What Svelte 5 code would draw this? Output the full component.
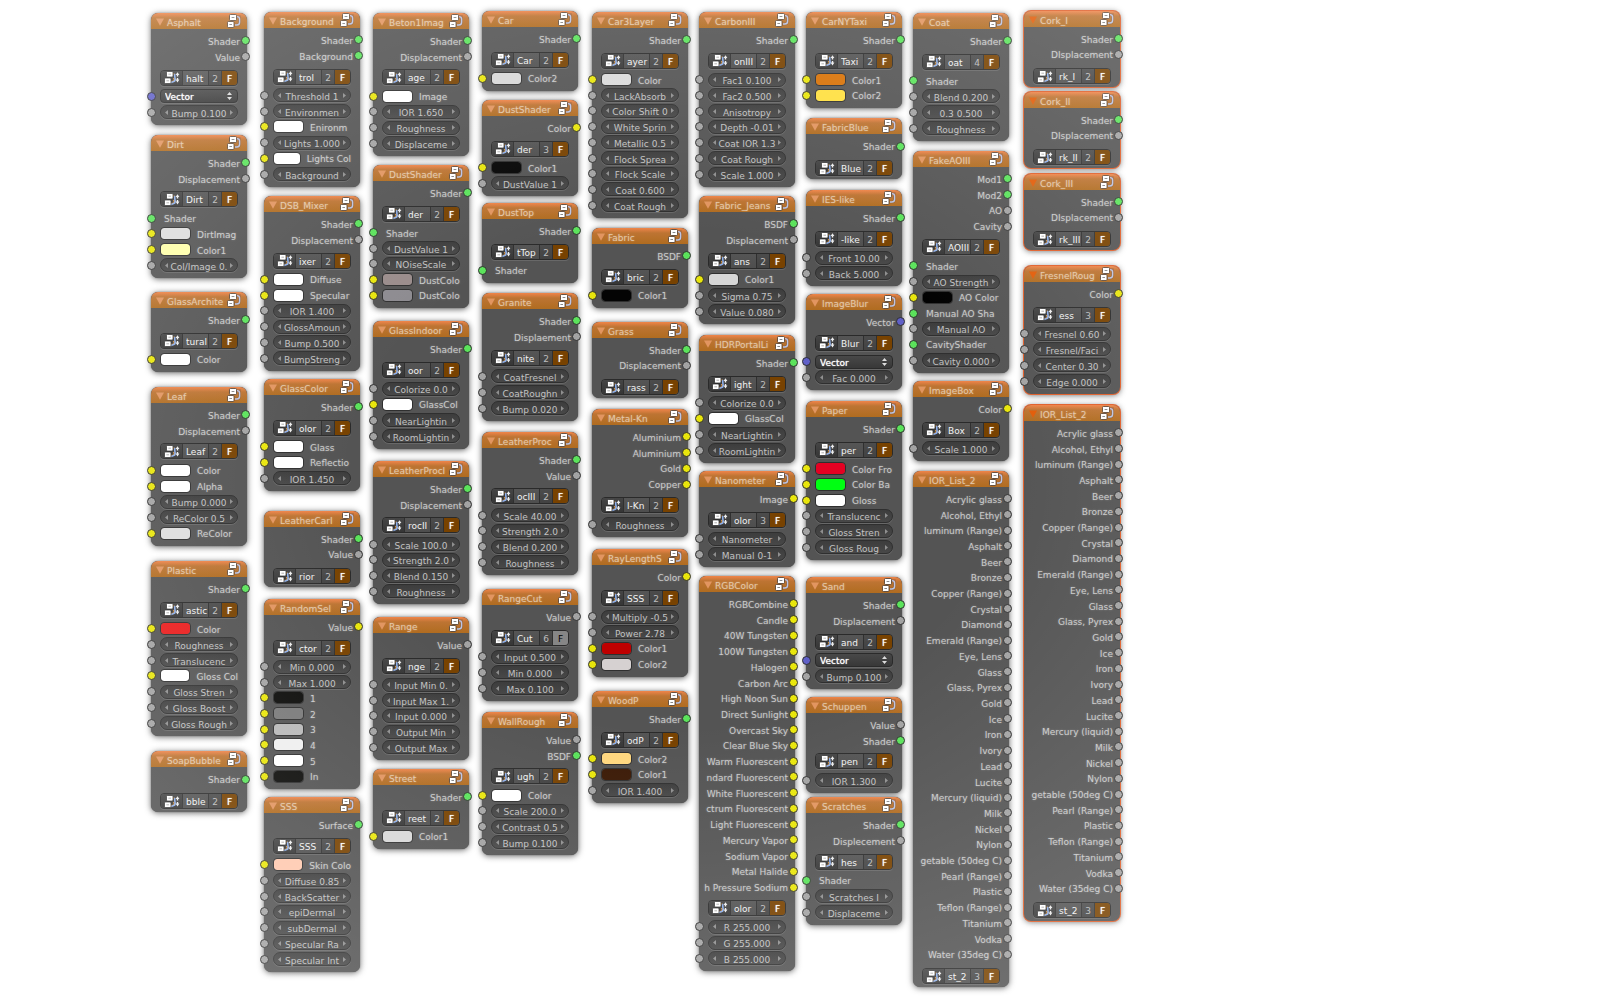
<script>
  const n = (text) => ({ kind: 'number', text, socket: 'grey' });
  const c = (color, text) => ({ kind: 'color', color, text, socket: 'yellow' });
  const s = (text) => ({ kind: 'plain', text, socket: 'green' });
  const vec = { kind: 'vector', text: 'Vector', socket: 'blue' };

  const g = (text) => ({ text, socket: 'green' });
  const v = (text) => ({ text, socket: 'grey' });
  const y = (text) => ({ text, socket: 'yellow' });
  const b = (text) => ({ text, socket: 'blue' });

  const W = '#ffffff';
  const materials = [
    'Acrylic glass', 'Alcohol, Ethyl', 'luminum (Range)', 'Asphalt', 'Beer', 'Bronze',
    'Copper (Range)', 'Crystal', 'Diamond', 'Emerald (Range)', 'Eye, Lens', 'Glass',
    'Glass, Pyrex', 'Gold', 'Ice', 'Iron', 'Ivory', 'Lead', 'Lucite', 'Mercury (liquid)',
    'Milk', 'Nickel', 'Nylon', 'getable (50deg C)', 'Pearl (Range)', 'Plastic',
    'Teflon (Range)', 'Titanium', 'Vodka', 'Water (35deg C)'
  ].map(v);
  const lights = [
    'RGBCombine', 'Candle', '40W Tungsten', '100W Tungsten', 'Halogen', 'Carbon Arc',
    'High Noon Sun', 'Direct Sunlight', 'Overcast Sky', 'Clear Blue Sky', 'Warm Fluorescent',
    'ndard Fluorescent', 'White Fluorescent', 'ctrum Fluorescent', 'Light Fluorescent',
    'Mercury Vapor', 'Sodium Vapor', 'Metal Halide', 'h Pressure Sodium'
  ].map(y);

  // Each column: left edge, then [top, title, group name, outputs, inputs, options]
  const columns = [
    [151, [
      [13, 'Asphalt', 'halt', [g('Shader'), v('Value')], [vec, n('Bump 0.100')]],
      [135, 'Dirt', 'Dirt', [g('Shader'), v('Displacement')], [s('Shader'), c('#dedede', 'DirtImag'), c('#ffffaa', 'Color1'), n('Col/Image 0.')]],
      [292, 'GlassArchite', 'tural', [g('Shader')], [c(W, 'Color')]],
      [387, 'Leaf', 'Leaf', [g('Shader'), v('Displacement')], [c(W, 'Color'), c(W, 'Alpha'), n('Bump 0.000'), n('ReColor 0.5'), c('#dedede', 'ReColor')]],
      [561, 'Plastic', 'astic', [g('Shader')], [c('#ea1c1c', 'Color'), n('Roughness'), n('Translucenc'), c(W, 'Gloss Col'), n('Gloss Stren'), n('Gloss Boost'), n('Gloss Rough')]],
      [751, 'SoapBubble', 'bble', [g('Shader')], []]
    ]],
    [264, [
      [12, 'Background', 'trol', [g('Shader'), g('Background')], [n('Threshold 1'), n('Environmen'), c(W, 'Enironm'), n('Lights 1.000'), c(W, 'Lights Col'), n('Background')]],
      [196, 'DSB_Mixer', 'ixer', [g('Shader'), v('Displacement')], [c(W, 'Diffuse'), c(W, 'Specular'), n('IOR 1.400'), n('GlossAmoun'), n('Bump 0.500'), n('BumpStreng')]],
      [379, 'GlassColor', 'olor', [g('Shader')], [c(W, 'Glass'), c(W, 'Reflectio'), n('IOR 1.450')]],
      [511, 'LeatherCarI', 'rior', [g('Shader'), v('Value')], []],
      [599, 'RandomSel', 'ctor', [y('Value')], [n('Min 0.000'), n('Max 1.000'), c('#0c0c0a', '1'), c('#7a7a7a', '2'), c('#b9b9b9', '3'), c('#efefef', '4'), c(W, '5'), c('#0c0c0a', 'In')]],
      [797, 'SSS', 'SSS', [g('Surface')], [c('#ffc9af', 'Skin Colo'), n('Diffuse 0.85'), n('BackScatter'), n('epiDermal'), n('subDermal'), n('Specular Ra'), n('Specular Int')]]
    ]],
    [373, [
      [13, 'Beton1Imag', 'age', [g('Shader'), v('Displacement')], [c(W, 'Image'), n('IOR 1.650'), n('Roughness'), n('Displaceme')]],
      [165, 'DustShader', 'der', [g('Shader')], [s('Shader'), n('DustValue 1'), n('NOiseScale'), c('#9a8c8b', 'DustColo'), c('#8d8b90', 'DustColo')]],
      [321, 'GlassIndoor', 'oor', [g('Shader')], [n('Colorize 0.0'), c(W, 'GlassCol'), n('NearLightin'), n('RoomLightin')]],
      [461, 'LeatherProcI', 'rocII', [g('Shader'), v('Displacement')], [n('Scale 100.0'), n('Strength 2.0'), n('Blend 0.150'), n('Roughness')]],
      [617, 'Range', 'nge', [v('Value')], [n('Input Min 0.'), n('Input Max 1.'), n('Input 0.000'), n('Output Min'), n('Output Max')]],
      [769, 'Street', 'reet', [g('Shader')], [c('#d8d8d8', 'Color1')]]
    ]],
    [482, [
      [11, 'Car', 'Car', [g('Shader')], [c('#d8d8d8', 'Color2')]],
      [100, 'DustShader', 'der', [y('Color')], [c('#040404', 'Color1'), n('DustValue 1')], { users: 3 }],
      [203, 'DustTop', 'tTop', [g('Shader')], [s('Shader')]],
      [293, 'Granite', 'nite', [g('Shader'), v('Displaement')], [n('CoatFresnel'), n('CoatRoughn'), n('Bump 0.020')]],
      [432, 'LeatherProc', 'ocIII', [g('Shader'), v('Value')], [n('Scale 40.00'), n('Strength 2.0'), n('Blend 0.200'), n('Roughness')]],
      [589, 'RangeCut', 'Cut', [v('Value')], [n('Input 0.500'), n('Min 0.000'), n('Max 0.100')], { users: 6, off: true }],
      [712, 'WallRough', 'ugh', [v('Value'), g('BSDF')], [c(W, 'Color'), n('Scale 200.0'), n('Contrast 0.5'), n('Bump 0.100')]]
    ]],
    [592, [
      [12, 'Car3Layer', 'ayer', [g('Shader')], [c('#dadada', 'Color'), n('LackAbsorb'), n('Color Shift 0'), n('White Sprin'), n('Metallic 0.5'), n('Flock Sprea'), n('Flock Scale'), n('Coat 0.600'), n('Coat Rough')]],
      [228, 'Fabric', 'bric', [g('BSDF')], [c('#040404', 'Color1')]],
      [322, 'Grass', 'rass', [g('Shader'), v('Displacement')], []],
      [409, 'Metal-Kn', 'l-Kn', [y('Aluminium'), y('Aluminium'), y('Gold'), y('Copper')], [n('Roughness')]],
      [549, 'RayLengthS', 'SSS', [y('Color')], [n('Multiply -0.5'), n('Power 2.78'), c('#bf0000', 'Color1'), c('#d6d1d1', 'Color2')]],
      [691, 'WoodP', 'odP', [g('Shader')], [c('#ffd77e', 'Color2'), c('#3b1a06', 'Color1'), n('IOR 1.400')]]
    ]],
    [699, [
      [12, 'CarbonIII', 'onIII', [g('Shader')], [n('Fac1 0.100'), n('Fac2 0.500'), n('Anisotropy'), n('Depth -0.01'), n('Coat IOR 1.3'), n('Coat Rough'), n('Scale 1.000')]],
      [196, 'Fabric_Jeans', 'ans', [g('BSDF'), v('Displacement')], [c('#d6d6d6', 'Color1'), n('Sigma 0.75'), n('Value 0.080')]],
      [335, 'HDRPortalLi', 'ight', [g('Shader')], [n('Colorize 0.0'), c(W, 'GlassCol'), n('NearLightin'), n('RoomLightin')]],
      [471, 'Nanometer', 'olor', [y('Image')], [n('Nanometer'), n('Manual 0-1')], { users: 3 }],
      [576, 'RGBColor', 'olor', lights, [n('R 255.000'), n('G 255.000'), n('B 255.000')]]
    ]],
    [806, [
      [12, 'CarNYTaxi', 'Taxi', [g('Shader')], [c('#d97206', 'Color1'), c('#ffe040', 'Color2')]],
      [118, 'FabricBlue', 'Blue', [g('Shader')], []],
      [190, 'IES-like', '-like', [g('Shader')], [n('Front 10.00'), n('Back 5.000')]],
      [294, 'ImageBlur', 'Blur', [b('Vector')], [vec, n('Fac 0.000')]],
      [401, 'Paper', 'per', [g('Shader')], [c('#e50022', 'Color Fro'), c('#00ff12', 'Color Ba'), c(W, 'Gloss'), n('Translucenc'), n('Gloss Stren'), n('Gloss Roug')]],
      [577, 'Sand', 'and', [g('Shader'), v('Displacement')], [vec, n('Bump 0.100')]],
      [697, 'Schuppen', 'pen', [v('Value'), g('Shader')], [n('IOR 1.300')]],
      [797, 'Scratches', 'hes', [g('Shader'), v('Displecement')], [s('Shader'), n('Scratches I'), n('Displaceme')]]
    ]],
    [913, [
      [13, 'Coat', 'oat', [g('Shader')], [s('Shader'), n('Blend 0.200'), n('0.3 0.500'), n('Roughness')], { users: 4 }],
      [151, 'FakeAOIII', 'AOIII', [g('Mod1'), g('Mod2'), v('AO'), v('Cavity')], [s('Shader'), n('AO Strength'), c('#000000', 'AO Color'), s('Manual AO Sha'), n('Manual AO'), s('CavityShader'), n('Cavity 0.000')]],
      [381, 'ImageBox', 'Box', [y('Color')], [n('Scale 1.000')]],
      [471, 'IOR_List_2', 'st_2', materials, [], { users: 3 }]
    ]],
    [1024, [
      [11, 'Cork_I', 'rk_I', [g('Shader'), v('DIsplacement')], [], { selected: true }],
      [92, 'Cork_II', 'rk_II', [g('Shader'), v('DIsplacement')], [], { selected: true }],
      [174, 'Cork_III', 'rk_III', [g('Shader'), v('DIsplacement')], [], { selected: true }],
      [266, 'FresnelRoug', 'ess', [y('Color')], [n('Fresnel 0.60'), n('Fresnel/Faci'), n('Center 0.30'), n('Edge 0.000')], { users: 3, selected: true }],
      [405, 'IOR_List_2', 'st_2', materials, [], { users: 3, selected: true }]
    ]]
  ];

  // Header, group selector and padding are fixed; seven socket rows span 110 pixels.
  const nodeHeight = (outs, ins) =>
    (ins.length ? 49 : 45) + Math.round(((outs.length + ins.length) * 110) / 7);

  const nodes = columns.flatMap(([x, list]) =>
    list.map(([top, title, name, outputs, inputs, opts = {}]) => ({
      x, top, title, name, outputs, inputs,
      height: nodeHeight(outputs, inputs),
      users: opts.users ?? 2,
      off: opts.off ?? false,
      selected: opts.selected ?? false
    }))
  );
</script>

<main class="canvas">
  {#each nodes as node, i}
    <section
      class="node"
      class:selected={node.selected}
      style="left:{node.x}px;top:{node.top}px;height:{node.height}px"
    >
      <header>
        <svg class="fold" viewBox="0 0 8 8" aria-hidden="true"><path d="M0 0.5H8L4 7.8Z" /></svg>
        <h2>{node.title}</h2>
        <svg class="group" viewBox="0 0 14 14" aria-hidden="true">
          <path d="M10 2.6H12.4V8.4Q12.4 11 9.6 11H8" fill="none" stroke="#3a3a48" stroke-width="2.6" opacity=".3" />
          <path d="M10 2.6Q12.6 2.6 12.6 5V8.2Q12.6 11 9.8 11H8" fill="none" stroke="#bcc4e4" stroke-width="1.4" />
          <rect x="2.5" y="0.5" width="7" height="6" rx="1" fill="#fff" stroke="#4a3626" stroke-width="0.8" />
          <path d="M4.6 3.5H7.4" stroke="#888" />
          <rect x="0.5" y="7.5" width="6.5" height="6" rx="1" fill="#fff" stroke="#4a3626" stroke-width="0.8" />
          <path d="M2.4 10.5H5" stroke="#888" />
        </svg>
      </header>
      <div class="body" class:bare={node.inputs.length === 0}>
        {#each node.outputs as out}
          <div class="row out">
            <span>{out.text}</span>
            <i class="socket {out.socket}"></i>
          </div>
        {/each}
        <div class="selector">
          <button class="browse" aria-label="Browse groups">
            <svg viewBox="0 0 16 13" aria-hidden="true">
              <path d="M8.4 3H10.6M9 7.5C11.2 8 11 10.4 7 10.4" fill="none" stroke="#e0953a" stroke-width="1.2" />
              <path d="M11 3C9.6 5.4 12.4 7.2 10.6 10.2L7 11.4" fill="none" stroke="#8fb0ea" stroke-width="1.6" />
              <rect x="2.5" y="0.5" width="6.5" height="5.5" rx="1" fill="#fff" stroke="#222" stroke-width="0.7" />
              <path d="M4.4 3.2H7" stroke="#999" stroke-width="0.8" />
              <rect x="0.5" y="7" width="6.5" height="5.5" rx="1" fill="#fff" stroke="#222" stroke-width="0.7" />
              <path d="M2.4 9.8H5" stroke="#999" stroke-width="0.8" />
              <path d="M13.5 1.2L15.4 4H14.2V5.6H12.8V4H11.6ZM13.5 11.4L11.6 8.6H12.8V7H14.2V8.6H15.4Z" fill="#eee" />
            </svg>
          </button>
          <input class="name" value={node.name} aria-label="Group name" />
          <button class="users" aria-label="Users">{node.users}</button>
          <button class="fake" class:off={node.off}>F</button>
        </div>
        {#each node.inputs as input, j}
          <div class="row in">
            <i class="socket {input.socket}"></i>
            {#if input.kind === 'number'}
              <div class="number">
                <button aria-label="Decrease"><svg viewBox="0 0 3 5" aria-hidden="true"><path d="M3 0V5L0 2.5Z" /></svg></button>
                <input value={input.text} aria-label={input.text} />
                <button aria-label="Increase"><svg viewBox="0 0 3 5" aria-hidden="true"><path d="M0 0V5L3 2.5Z" /></svg></button>
              </div>
            {:else if input.kind === 'color'}
              <input class="swatch" type="color" id="color-{i}-{j}" value={input.color} />
              <label for="color-{i}-{j}">{input.text}</label>
            {:else if input.kind === 'vector'}
              <div class="vector">
                <select aria-label="Vector"><option>Vector</option></select>
                <svg viewBox="0 0 5 8" aria-hidden="true"><path d="M2.5 0L5 3H0ZM2.5 8L0 5H5Z" /></svg>
              </div>
            {:else}
              <span class="plain">{input.text}</span>
            {/if}
          </div>
        {/each}
      </div>
    </section>
  {/each}
  <div class="haze"></div>
</main>

<style>
  :global(body) {
    margin: 0;
    background: #fff;
  }
  .canvas {
    position: relative;
    min-height: 100vh;
    overflow: hidden;
    font: 9px/12px 'DejaVu Sans', sans-serif;
    color: #cacaca;
  }
  .canvas * {
    box-sizing: border-box;
  }
  .haze {
    position: absolute;
    inset: 0;
    pointer-events: none;
    background: radial-gradient(ellipse 50% 62% at 42% 48%, rgba(255, 255, 255, 0) 40%, rgba(255, 255, 255, 0.18) 100%);
  }
  button,
  input,
  select {
    font: inherit;
    color: inherit;
    margin: 0;
    padding: 0;
    border: 0;
    background: none;
    min-width: 0;
    outline: 0;
  }
  .node {
    position: absolute;
    width: 96px;
    display: flex;
    flex-direction: column;
    border-radius: 7px;
    background: #545454;
    box-shadow: 0 1px 6px rgba(0, 0, 0, 0.65), 0 0 1px rgba(0, 0, 0, 0.7);
  }
  .node.selected {
    box-shadow: 0 0 0 1px #e0602c, 0 1px 6px rgba(0, 0, 0, 0.65);
  }
  header {
    flex: none;
    height: 16px;
    display: flex;
    align-items: center;
    padding: 0 6px 0 5px;
    border-radius: 7px 7px 0 0;
    background: linear-gradient(#f0854a, #bd7433 5px, #b06c20);
  }
  h2 {
    flex: 1;
    min-width: 0;
    margin: 4px 0 0 3px;
    font: inherit;
    color: #e3c8ab;
    white-space: nowrap;
    text-shadow: 0 0 2px rgba(255, 235, 215, 0.4);
  }
  .fold {
    width: 8px;
    height: 8px;
    margin-top: 2px;
    fill: #e29560;
  }
  .selected .fold {
    fill: #e25c08;
  }
  .group {
    width: 14px;
    height: 14px;
    flex: none;
  }
  .body {
    flex: 1;
    display: flex;
    flex-direction: column;
    padding: 4px 0 5px;
  }
  .body.bare {
    padding-bottom: 0;
  }
  .row {
    flex: 1 1 0;
    min-height: 0;
    display: flex;
    align-items: center;
    white-space: nowrap;
    text-shadow: 0 0 2px rgba(230, 230, 230, 0.4);
  }
  .out {
    justify-content: flex-end;
    gap: 1px;
    margin-right: -3px;
  }
  .out span,
  .plain,
  label {
    padding-top: 2px;
  }
  .in {
    gap: 4px;
    margin-left: -4px;
    padding-right: 9px;
  }
  .plain {
    padding-left: 4px;
  }
  .socket {
    position: relative;
    flex: none;
    width: 9px;
    height: 9px;
    border: 1px solid #303030;
    border-radius: 50%;
  }
  .green {
    background: #5be35b;
  }
  .yellow {
    background: #e9e60c;
  }
  .grey {
    background: #a3a3a3;
  }
  .blue {
    background: #6060c8;
  }
  .selector {
    flex: none;
    height: 16px;
    margin: 5px 9px 3px;
    display: grid;
    grid-template-columns: 21px 1fr 13px 16px;
    border: 1px solid #2a2a2a;
    border-radius: 4px;
    overflow: hidden;
    box-shadow: 0 1px 0 rgba(255, 255, 255, 0.12);
  }
  .bare .selector {
    margin-top: 6px;
  }
  .selector > * {
    background: linear-gradient(#4c4c4c, #424242);
    border-left: 1px solid #303030;
  }
  .selector > .browse {
    display: flex;
    align-items: center;
    justify-content: center;
    border-left: 0;
    background: linear-gradient(#454545, #363636);
  }
  .browse svg {
    width: 16px;
    height: 13px;
  }
  .selector > .name {
    width: 100%;
    padding: 2px 0 0 3px;
    color: #f2f2f2;
    background: linear-gradient(#555, #4e4e4e);
  }
  .users {
    color: #bdbdbd;
    padding-top: 2px;
  }
  .selector > .fake {
    color: #fff;
    padding-top: 2px;
    background: #784200;
    text-shadow: 0 0 1px #fff;
  }
  .selector > .fake.off {
    color: #000;
    background: #868686;
    text-shadow: none;
  }
  .number {
    flex: 1;
    min-width: 0;
    height: 14px;
    display: flex;
    align-items: center;
    border: 1px solid #2f2f2f;
    border-radius: 7px;
    background: linear-gradient(#3d3d3d, #484848);
    box-shadow: 0 1px 0 rgba(255, 255, 255, 0.12);
  }
  .number input {
    flex: 1;
    width: 0;
    height: 14px;
    padding-top: 3px;
    text-align: center;
    color: #c2c2c2;
  }
  .number button {
    flex: none;
    width: 7px;
    display: flex;
    justify-content: flex-end;
  }
  .number button:last-child {
    justify-content: flex-start;
  }
  .number svg {
    width: 3px;
    height: 5px;
    fill: #909090;
  }
  .swatch {
    appearance: none;
    width: 31px;
    height: 13px;
    border: 1px solid #2f2f2f;
    border-radius: 4px;
    overflow: hidden;
  }
  .swatch::-webkit-color-swatch-wrapper {
    padding: 0;
  }
  .swatch::-webkit-color-swatch {
    border: 0;
    border-radius: 3px;
  }
  label {
    padding-left: 2px;
  }
  .vector {
    flex: 1;
    height: 14px;
    display: flex;
    align-items: center;
    padding: 0 5px 0 4px;
    border: 1px solid #2a2a2a;
    border-radius: 4px;
    background: linear-gradient(#484848, #383838);
    box-shadow: 0 1px 0 rgba(255, 255, 255, 0.12);
  }
  .vector select {
    appearance: none;
    flex: 1;
    height: 12px;
    padding-top: 1px;
    color: #fff;
    text-shadow: 0 0 1px #fff;
  }
  .vector svg {
    width: 5px;
    height: 8px;
    fill: #ddd;
  }
</style>
